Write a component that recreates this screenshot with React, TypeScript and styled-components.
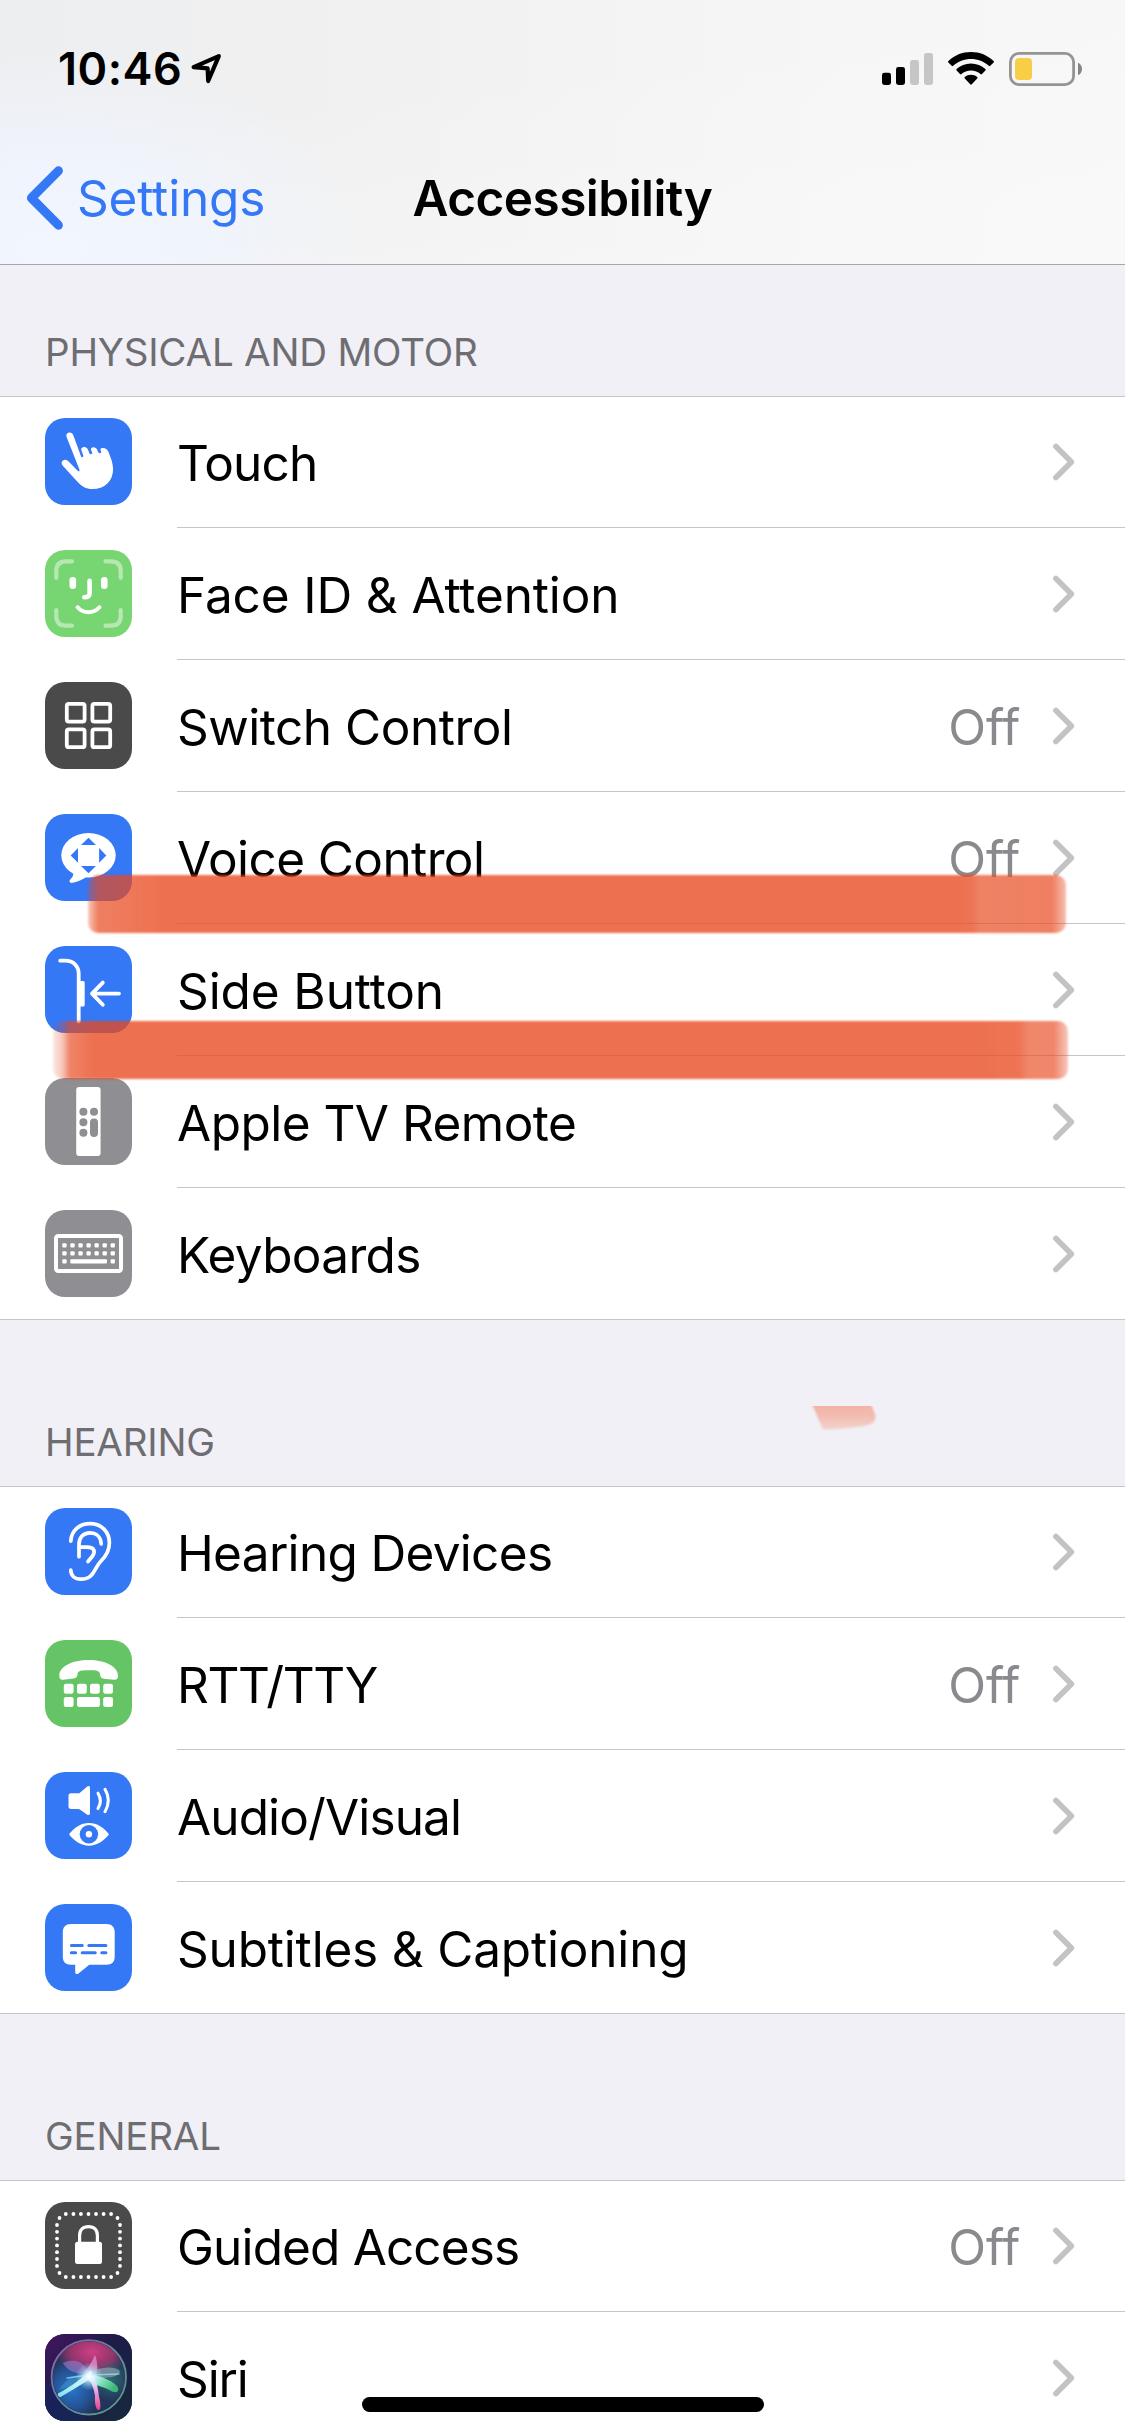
import React from "react";
import styled, { createGlobalStyle } from "styled-components";

const GlobalStyle = createGlobalStyle`
  *, *::before, *::after { box-sizing: border-box; }
  body {
    margin: 0;
    background: #f1f0f6;
    font-family: Inter, "Liberation Sans", sans-serif;
    font-size: 49.5px;
    color: #000;
  }
  svg { display: block; flex: none; }
`;

const Screen = styled.div`
  position: relative;
  width: 1125px;
  height: 2435px;
  overflow: hidden;
  background: #f1f0f6;
`;

const Header = styled.header`
  height: 265px;
  border-bottom: 1px solid #a8a8ac;
  background:
    radial-gradient(ellipse 330px 200px at 50px 250px, #f2f6ff 0%, rgba(240, 245, 255, 0.75) 45%, rgba(240, 244, 255, 0) 100%),
    linear-gradient(172deg, rgba(255, 255, 255, 0) 30%, rgba(255, 255, 255, 0.3) 100%),
    linear-gradient(90deg, #edeef0 0%, #f1f1f1 35%, #f6f6f6 75%, #f7f7f7 100%);
`;

const StatusBar = styled.div`
  display: flex;
  align-items: center;
  height: 132px;
  padding: 6px 43px 0 58px;
`;

const Time = styled.span`
  font-size: 45px;
  font-weight: 600;
  letter-spacing: 0.49px;
  line-height: 56px;
  margin-right: 8px;
`;

const StatusIcons = styled.div`
  display: flex;
  align-items: center;
  gap: 15px;
  margin-left: auto;
`;

const NavBar = styled.nav`
  display: grid;
  grid-template-columns: 1fr auto 1fr;
  align-items: center;
  height: 132px;
`;

const BackLink = styled.a`
  display: flex;
  align-items: center;
  gap: 14px;
  padding-left: 26px;
  color: #3478f6;
  letter-spacing: -0.16px;
  line-height: 60px;
`;

const Title = styled.h1`
  margin: 0;
  font-size: 49.5px;
  font-weight: 600;
  letter-spacing: -0.54px;
  line-height: 60px;
`;

const SectionHeader = styled.h2<{ $height: number }>`
  display: flex;
  align-items: flex-end;
  height: ${(p) => p.$height}px;
  margin: 0;
  padding: 0 45px 21px;
  font-size: 38.5px;
  font-weight: 400;
  letter-spacing: -0.2px;
  line-height: 46px;
  color: #6d6d72;
`;

const Group = styled.div`
  background: #fff;
  box-shadow: inset 0 1px 0 #c6c6c8, inset 0 -1px 0 #c6c6c8;
`;

const RowContent = styled.div`
  display: flex;
  flex: 1;
  align-items: center;
  margin-left: 45px;
  padding-right: 50px;
  border-bottom: 1px solid #c6c6c8;
`;

const Row = styled.div`
  display: flex;
  height: 132px;
  padding-left: 45px;

  &:last-child ${RowContent} {
    border-bottom-color: transparent;
  }
`;

const Tile = styled.div<{ $color: string }>`
  flex: none;
  width: 87px;
  height: 87px;
  margin-top: 22px;
  border-radius: 20px;
  overflow: hidden;
  background: ${(p) => p.$color};
`;

const Label = styled.span<{ $tracking: number }>`
  flex: 1;
  padding-top: 3px;
  line-height: 60px;
  white-space: nowrap;
  letter-spacing: ${(p) => p.$tracking}px;
`;

const Value = styled.span`
  margin-right: 33px;
  padding-top: 3px;
  line-height: 60px;
  letter-spacing: -0.3px;
  color: #8a8a8e;
`;

const HomeIndicator = styled.div`
  position: absolute;
  left: 362px;
  bottom: 23px;
  width: 402px;
  height: 15px;
  border-radius: 8px;
  background: #000;
`;

const Marker = styled.div<{ $x: number; $y: number; $w: number; $h: number; $ink: string }>`
  position: absolute;
  left: ${(p) => p.$x}px;
  top: ${(p) => p.$y}px;
  width: ${(p) => p.$w}px;
  height: ${(p) => p.$h}px;
  border-radius: 10px;
  background: ${(p) => p.$ink};
  filter: blur(0.9px);
`;

const Smudge = styled.svg`
  position: absolute;
  left: 808px;
  top: 1406px;
`;

const BLUE = "#3478f6";
const GRAY = "#8e8e93";
const DARK = "#4a4a4a";

const Glyph = ({ children }: { children: React.ReactNode }) => (
  <svg width="87" height="87" viewBox="0 0 87 87" fill="none" stroke="none" strokeLinecap="round" strokeLinejoin="round">
    {children}
  </svg>
);

const TouchIcon = () => (
  <Glyph>
    <path
      fill="#fff"
      d="M21.7 19.2C20.7 16.6 22 14.9 24 14.5C26 14.2 27.6 15.1 28.3 17.2L36.1 38.6C36.5 39.8 38.8 39.2 38.4 37.8L36.4 32.2C36 30.6 36.4 29.8 38 29.3C40.2 28.7 42 29.5 42.9 31.6L44.5 35.6C45 36.9 47.6 36.3 47.2 34.8L46 31.7C45.7 30.5 46.4 29.7 47.6 29.4C49.6 29 51.5 30 52.3 31.9L53.4 34.5C54 35.8 56.6 35.2 56.2 33.7L55.5 31.8C55.3 30.8 56 30.1 57 30C60 29.7 62.3 31 63.6 34.2C66 40.2 68.1 45.5 68.1 51C68.1 63 59.8 71.1 47.3 71.1C41.2 71.1 36.6 68.4 32.2 63.5L17.8 47.8C16.3 46 16.3 44 17.6 42.7C19.2 41.3 21.4 41.5 23.1 43L32.7 52.7C33.8 53.8 35 53.2 34.4 51.5Z"
    />
  </Glyph>
);

const FaceIcon = () => (
  <Glyph>
    <g stroke="#fff" strokeOpacity="0.46" strokeWidth="4.2">
      <path d="M11.3 27.8V21C11.3 14.5 14.5 11.3 21 11.3H27" />
      <path d="M60.5 11.3H66C72.5 11.3 75.7 14.5 75.7 21V27.8" />
      <path d="M11.3 60V66C11.3 72.5 14.5 75.7 21 75.7H27" />
      <path d="M60.5 75.7H66C72.5 75.7 75.7 72.5 75.7 66V60" />
    </g>
    <rect x="24.5" y="27" width="6.6" height="12" rx="3.3" fill="#fff" />
    <rect x="56" y="27" width="6.6" height="12" rx="3.3" fill="#fff" />
    <path d="M44.6 30.7V43C44.6 46.3 43 47.3 39.3 47.3" stroke="#fff" strokeWidth="4.6" />
    <path d="M32.6 57.3C38.5 64 48.5 64 54.4 57.3" stroke="#fff" strokeWidth="4" />
  </Glyph>
);

const SwitchIcon = () => (
  <Glyph>
    {[21.8, 47.4].map((x) =>
      [21.8, 47.4].map((y) => <rect key={`${x}-${y}`} x={x} y={y} width="17.8" height="17.8" rx="2" stroke="#fff" strokeWidth="3.8" />),
    )}
  </Glyph>
);

const VoiceIcon = () => (
  <Glyph>
    <ellipse cx="43.5" cy="41.3" rx="27.2" ry="22.3" fill="#fff" />
    <path d="M28 57.5C29 61 27.5 63.2 25.2 65.6C23.6 67.6 25 69.4 27.6 68.8C33.5 67.5 38 65.2 42 62.5Z" fill="#fff" />
    <path d="M43.5 23.7L51 31H36ZM43.5 59.3L36 52.1H51ZM25.7 41.4L33 34V48.8ZM61.3 41.4L54.1 48.8V34Z" fill={BLUE} />
  </Glyph>
);

const SideIcon = () => (
  <Glyph>
    <path d="M15.2 14.7H20C28.5 14.7 33.7 20 33.7 28V75.5" stroke="#fff" strokeWidth="3.8" />
    <rect x="33" y="35" width="6.7" height="25.5" rx="1.5" fill="#fff" />
    <path d="M74 47.6H47.2M57.8 36.6L47 47.6L57.8 58.8" stroke="#fff" strokeWidth="3.8" />
  </Glyph>
);

const RemoteIcon = () => (
  <Glyph>
    <rect x="31.2" y="9" width="24.4" height="69" rx="3" fill="#fff" />
    <g fill={GRAY}>
      <circle cx="38.4" cy="33.8" r="4" />
      <circle cx="49" cy="33.8" r="4" />
      <circle cx="38.4" cy="44.3" r="4" />
      <circle cx="38.4" cy="54.8" r="4" />
      <rect x="45" y="40.5" width="8" height="18.4" rx="4" />
    </g>
  </Glyph>
);

const KeyboardIcon = () => (
  <Glyph>
    <rect x="11" y="26" width="65" height="35" rx="2.2" stroke="#fff" strokeWidth="4" />
    <g fill="#fff">
      {[0, 1, 2, 3, 4, 5, 6].map((i) =>
        [0, 1].map((j) => <rect key={`${i}-${j}`} x={17.3 + i * 8.05} y={33.2 + j * 8} width="4.3" height="4.3" rx="1" />),
      )}
      <rect x="17.3" y="49.2" width="4.3" height="4.3" rx="1" />
      <rect x="65.6" y="49.2" width="4.3" height="4.3" rx="1" />
      <rect x="25.3" y="49.2" width="36.7" height="4.3" rx="1" />
    </g>
  </Glyph>
);

const EarIcon = () => (
  <Glyph>
    <g stroke="#fff" strokeWidth="3.7">
      <path d="M25.8 33.2C26.3 22.5 34.5 15.7 45 15.7C56.5 15.7 64.4 23.8 64.4 35C64.4 43 60.8 48.3 56 53C48.5 60.5 49.5 71.2 36 71.2C29.5 71.2 26 67.5 25.8 62.2" />
      <path d="M34 48.7V36.5C34 29.5 38.3 24.9 45 24.9C51.6 24.9 56 29.3 56.2 36" />
      <path d="M34 39.2H42C49.5 39.2 50.5 43.5 47.6 48L43 53.5" />
    </g>
  </Glyph>
);

const PhoneIcon = () => (
  <Glyph>
    <g fill="#fff">
      <path d="M14.3 35.5C14.3 26.5 27 20 43.7 20S73 26.8 73 35.5C73 38.8 71.8 39.9 69 39.7L59 38.7C56.2 38.3 55.2 37 55 34.2C54.7 30.8 52 30.2 43.7 30.2S32.8 30.8 32.5 34.2C32.2 37 31.2 38 28.4 38.4L18.2 39.7C15.4 40 14.3 38.8 14.3 35.5Z" />
      {[18.8, 32, 45, 58.2].map((x) => (
        <rect key={x} x={x} y="43.7" width="9.8" height="10" rx="2.2" />
      ))}
      <rect x="18.8" y="57" width="9.8" height="10" rx="2.2" />
      <rect x="32" y="57" width="22.9" height="10" rx="2.2" />
      <rect x="58.2" y="57" width="9.8" height="10" rx="2.2" />
    </g>
  </Glyph>
);

const AudioVisualIcon = () => (
  <Glyph>
    <path d="M26 21.3H33.2C34 21.3 34.6 21 35.2 20.4L42 14.7C43.3 13.6 45 14 45 15.8V41.3C45 43 43.3 43.6 42 42.4L35.2 37.7C34.6 37.2 34 37 33.2 37H26C24.4 37 23.5 36 23.5 34.5V23.8C23.5 22.3 24.4 21.3 26 21.3Z" fill="#fff" />
    <path d="M53 21.2C56 26 56 31.6 53 36.5M60 17.3C64.3 24.5 64.3 32.5 60 39.7" stroke="#fff" strokeWidth="3.1" />
    <path d="M24 62.3C29 55.7 36 51 44 51S59 55.7 64 62.3C59 69 52 73.7 44 73.7S29 69 24 62.3Z" fill="#fff" />
    <circle cx="43.9" cy="62.2" r="9.2" fill={BLUE} />
    <circle cx="43.9" cy="62.2" r="3.2" fill="#fff" />
  </Glyph>
);

const CaptionIcon = () => (
  <Glyph>
    <path d="M26 20H61.5C66.8 20 69.7 23 69.7 28V52.7C69.7 57.8 66.8 60.7 61.5 60.7H44.3L33.8 69.2C32 70.7 30.2 70.2 30.2 68V60.7H26C20.7 60.7 17.8 57.8 17.8 52.7V28C17.8 23 20.7 20 26 20Z" fill="#fff" />
    <path d="M26.4 41.6H37.3M43.8 41.6H60.9M26.4 48.7H30.6M37.2 48.7H50.3M56.8 48.7H60.9" stroke={BLUE} strokeWidth="3" />
  </Glyph>
);

const columnDots = [23, 29.8, 36.6, 43.4, 50.2, 57, 63.9];
const rowDots = [20.8, 28.4, 35.9, 43.5, 51, 58.6, 66.1];

const LockIcon = () => (
  <Glyph>
    <g fill="#fff">
      {rowDots.map((x) => [12, 75].map((y) => <circle key={`r${x}-${y}`} cx={x} cy={y} r="1.9" />))}
      {columnDots.map((y) => [12, 75].map((x) => <circle key={`c${x}-${y}`} cx={x} cy={y} r="1.9" />))}
      {[14.5, 72.5].map((x) => [16, 71].map((y) => <circle key={`k${x}-${y}`} cx={x} cy={y} r="1.9" />))}
      <rect x="30" y="39.7" width="27" height="22.4" rx="2.5" />
    </g>
    <path d="M34.6 41V33.5C34.6 28 38 24.6 43.5 24.6S52.4 28 52.4 33.5V41" stroke="#fff" strokeWidth="3.2" />
  </Glyph>
);

const SiriIcon = () => (
  <Glyph>
    <defs>
      <linearGradient id="siriBg" x1="0" y1="0" x2="1" y2="1">
        <stop offset="0" stopColor="#431560" />
        <stop offset="0.45" stopColor="#1d1c48" />
        <stop offset="1" stopColor="#162a3c" />
      </linearGradient>
      <linearGradient id="siriRing" x1="0" y1="0" x2="1" y2="1">
        <stop offset="0" stopColor="#9a6bb4" />
        <stop offset="0.5" stopColor="#6f9aa8" />
        <stop offset="1" stopColor="#6fae9c" />
      </linearGradient>
      <radialGradient id="siriPink">
        <stop offset="0" stopColor="#cf3f86" />
        <stop offset="0.6" stopColor="#a8356e" stopOpacity="0.85" />
        <stop offset="1" stopColor="#a8356e" stopOpacity="0" />
      </radialGradient>
      <radialGradient id="siriBlue">
        <stop offset="0" stopColor="#2a78cc" />
        <stop offset="0.6" stopColor="#245ca6" stopOpacity="0.8" />
        <stop offset="1" stopColor="#245ca6" stopOpacity="0" />
      </radialGradient>
      <radialGradient id="siriGreen">
        <stop offset="0" stopColor="#2f7f78" stopOpacity="0.7" />
        <stop offset="1" stopColor="#2f7f78" stopOpacity="0" />
      </radialGradient>
      <radialGradient id="siriGlow">
        <stop offset="0" stopColor="#fff" />
        <stop offset="0.35" stopColor="#d4f4ff" stopOpacity="0.75" />
        <stop offset="1" stopColor="#9adfff" stopOpacity="0" />
      </radialGradient>
      <linearGradient id="siriArm" x1="1" y1="0" x2="0" y2="1">
        <stop offset="0" stopColor="#fff" />
        <stop offset="1" stopColor="#7fe2ee" />
      </linearGradient>
      <linearGradient id="siriLeaf" x1="0" y1="0" x2="1" y2="0.5">
        <stop offset="0" stopColor="#f0fffb" />
        <stop offset="0.55" stopColor="#7fe0b8" />
        <stop offset="1" stopColor="#3cb878" />
      </linearGradient>
      <linearGradient id="siriStem" x1="0" y1="0" x2="0" y2="1">
        <stop offset="0" stopColor="#fff" />
        <stop offset="0.5" stopColor="#e79bdc" />
        <stop offset="1" stopColor="#e0448c" />
      </linearGradient>
      <clipPath id="siriClip">
        <circle cx="43.8" cy="43.3" r="36" />
      </clipPath>
      <filter id="siriSoft" x="-20%" y="-20%" width="140%" height="140%">
        <feGaussianBlur stdDeviation="0.7" />
      </filter>
    </defs>
    <rect width="87" height="87" fill="url(#siriBg)" />
    <rect y="50" width="40" height="37" fill="#142a6c" opacity="0.45" filter="url(#siriSoft)" />
    <circle cx="43.8" cy="43.3" r="36" fill="#22345a" />
    <g clipPath="url(#siriClip)">
      <ellipse cx="47" cy="18" rx="36" ry="25" fill="url(#siriPink)" />
      <ellipse cx="27" cy="55" rx="30" ry="31" fill="url(#siriBlue)" />
      <ellipse cx="66" cy="46" rx="22" ry="22" fill="url(#siriGreen)" />
      <g filter="url(#siriSoft)">
        <path d="M18 29C29 24 39 27 44 40C33 41 22 37 18 29Z" fill="#b583d0" opacity="0.5" />
        <path d="M50 21C53 29 53 36 50 44L36 43C42 36 47 28 50 21Z" fill="#e59ad4" opacity="0.7" />
        <path d="M44 40C55 32 71 32 75 37C75 43 62 45 45 44Z" fill="#9fb8c6" opacity="0.55" />
        <path d="M44 40C32 38 20 45 14 56L44 46Z" fill="#4db2dc" opacity="0.35" />
        <path d="M46 36C37 44 27 52 13 59.5C12.5 61.5 13.5 63 15.5 63C27 56 38 50 48 43Z" fill="url(#siriArm)" />
        <path d="M43 40C53 41 65 45 72 52C75 57 72 60 66 57C58 52 50 52 43 46Z" fill="url(#siriLeaf)" />
        <path d="M41 42C47 48 49 55 50 62C49.5 69 51 76 53.5 76C56 76 56 70 54 63C53 55 52 49 49 42Z" fill="url(#siriStem)" />
        <path d="M22 44L44 41L74 40" stroke="#b9f3f2" strokeWidth="1.4" opacity="0.6" />
      </g>
      <circle cx="44.5" cy="42.5" r="14" fill="url(#siriGlow)" />
    </g>
    <circle cx="43.8" cy="43.3" r="37.2" stroke="url(#siriRing)" strokeWidth="1.8" opacity="0.85" />
  </Glyph>
);

const Chevron = () => (
  <svg width="22" height="38" viewBox="0 0 22 38" fill="none">
    <path d="M2.9 3.5L18.4 19L2.9 34.5" stroke="#c3c3c6" strokeWidth="5.6" strokeLinecap="round" strokeLinejoin="round" />
  </svg>
);

type Item = { label: string; tracking: number; color: string; icon: React.ReactNode; value?: string };
type SectionData = { title: string; height: number; items: Item[] };

const sections: SectionData[] = [
  {
    title: "PHYSICAL AND MOTOR",
    height: 131,
    items: [
      { label: "Touch", tracking: -0.83, color: BLUE, icon: <TouchIcon /> },
      { label: "Face ID & Attention", tracking: -0.12, color: "#78d672", icon: <FaceIcon /> },
      { label: "Switch Control", tracking: -0.48, color: DARK, icon: <SwitchIcon />, value: "Off" },
      { label: "Voice Control", tracking: -0.6, color: BLUE, icon: <VoiceIcon />, value: "Off" },
      { label: "Side Button", tracking: -0.1, color: BLUE, icon: <SideIcon /> },
      { label: "Apple TV Remote", tracking: -0.52, color: GRAY, icon: <RemoteIcon /> },
      { label: "Keyboards", tracking: -0.68, color: GRAY, icon: <KeyboardIcon /> },
    ],
  },
  {
    title: "HEARING",
    height: 166,
    items: [
      { label: "Hearing Devices", tracking: -0.68, color: BLUE, icon: <EarIcon /> },
      { label: "RTT/TTY", tracking: -1.35, color: "#65c466", icon: <PhoneIcon />, value: "Off" },
      { label: "Audio/Visual", tracking: -0.87, color: BLUE, icon: <AudioVisualIcon /> },
      { label: "Subtitles & Captioning", tracking: -0.18, color: BLUE, icon: <CaptionIcon /> },
    ],
  },
  {
    title: "GENERAL",
    height: 166,
    items: [
      { label: "Guided Access", tracking: -0.85, color: DARK, icon: <LockIcon />, value: "Off" },
      { label: "Siri", tracking: -1.1, color: "#1d1c48", icon: <SiriIcon /> },
    ],
  },
];

const ink = (alpha: number) => `rgba(232, 73, 31, ${alpha})`;

export default function App() {
  return (
    <>
      <GlobalStyle />
      <Screen>
        <Header>
          <StatusBar>
            <Time>10:46</Time>
            <svg width="33" height="34" viewBox="0 0 33 34" fill="none">
              <path d="M3.6 15.2L28.8 4.2L18.2 29L17.6 16.4Z" stroke="#000" strokeWidth="4.2" strokeLinejoin="round" />
            </svg>
            <StatusIcons>
              <svg width="51" height="34" viewBox="0 0 51 34">
                <rect x="0" y="20.8" width="9" height="12.2" rx="2.4" fill="#000" />
                <rect x="14" y="15" width="9" height="18" rx="2.4" fill="#000" />
                <rect x="28" y="8" width="9" height="25" rx="2.4" fill="#c6c6c6" />
                <rect x="42" y="1" width="9" height="32" rx="2.4" fill="#c6c6c6" />
              </svg>
              <svg width="46" height="34" viewBox="0 0 46 34" fill="#000">
                <path d="M23 0C31.8 0 39.6 3.3 45.6 9C46.1 9.5 46.1 10 45.6 10.5L42.3 13.8C41.8 14.3 41.3 14.3 40.8 13.8C36 9.4 29.8 7 23 7S10 9.4 5.2 13.8C4.7 14.3 4.2 14.3 3.7 13.8L.4 10.5C-.1 10-.1 9.5.4 9C6.4 3.3 14.2 0 23 0Z" />
                <path d="M23 11.4C28.6 11.4 33.6 13.5 37.4 17.1C37.9 17.6 37.9 18.1 37.4 18.6L34 22C33.5 22.5 33 22.5 32.5 22C30 19.8 26.7 18.4 23 18.4S16 19.8 13.5 22C13 22.5 12.5 22.5 12 22L8.6 18.6C8.1 18.1 8.1 17.6 8.6 17.1C12.4 13.5 17.4 11.4 23 11.4Z" />
                <path d="M23 22.8C25.5 22.8 27.5 23.6 29.2 25.1C29.7 25.6 29.7 26.1 29.2 26.6L23.8 32.2C23.3 32.8 22.7 32.8 22.2 32.2L16.8 26.6C16.3 26.1 16.3 25.6 16.8 25.1C18.5 23.6 20.5 22.8 23 22.8Z" />
              </svg>
              <svg width="73" height="34" viewBox="0 0 73 34">
                <rect x="1.4" y="1.4" width="63.2" height="31.2" rx="8.6" fill="none" stroke="#949494" strokeWidth="2.8" />
                <rect x="6" y="6" width="17" height="22" rx="4" fill="#f7ce46" />
                <path d="M69 10.7C71.6 11.8 73 14 73 17S71.6 22.2 69 23.3Z" fill="#868686" />
              </svg>
            </StatusIcons>
          </StatusBar>
          <NavBar>
            <BackLink>
              <svg width="37" height="64" viewBox="0 0 37 64" fill="none">
                <path d="M32.4 4.8L5.4 32L32.4 59.2" stroke={BLUE} strokeWidth="9" strokeLinecap="round" strokeLinejoin="round" />
              </svg>
              Settings
            </BackLink>
            <Title>Accessibility</Title>
          </NavBar>
        </Header>

        {sections.map((section) => (
          <section key={section.title}>
            <SectionHeader $height={section.height}>{section.title}</SectionHeader>
            <Group>
              {section.items.map((item) => (
                <Row key={item.label}>
                  <Tile $color={item.color}>{item.icon}</Tile>
                  <RowContent>
                    <Label $tracking={item.tracking}>{item.label}</Label>
                    {item.value && <Value>{item.value}</Value>}
                    <Chevron />
                  </RowContent>
                </Row>
              ))}
            </Group>
          </section>
        ))}

        <Marker
          $x={88}
          $y={875}
          $w={978}
          $h={58}
          $ink={`linear-gradient(90deg, ${ink(0.3)} 0, ${ink(0.7)} 10px, ${ink(0.76)} 60px, ${ink(0.78)} 76px, ${ink(0.78)} 870px, ${ink(0.76)} 884px, ${ink(0.69)} 892px, ${ink(0.7)} 964px, ${ink(0.35)} 978px)`}
        />
        <Marker
          $x={53}
          $y={1021}
          $w={1015}
          $h={58}
          $ink={`linear-gradient(90deg, ${ink(0.12)} 0, ${ink(0.3)} 9px, ${ink(0.68)} 17px, ${ink(0.78)} 40px, ${ink(0.78)} 920px, ${ink(0.76)} 966px, ${ink(0.66)} 976px, ${ink(0.66)} 1001px, ${ink(0.3)} 1015px)`}
        />
        <Smudge width="74" height="28" viewBox="0 0 74 28">
          <defs>
            <linearGradient id="smudge" x1="0" y1="0" x2="0" y2="1">
              <stop offset="0" stopColor="#f2b0a2" />
              <stop offset="0.5" stopColor="#f3bbb0" />
              <stop offset="1" stopColor="#f3d3ce" />
            </linearGradient>
            <filter id="smudgeSoft">
              <feGaussianBlur stdDeviation="1" />
            </filter>
          </defs>
          <path d="M3 -4L15 23.5C30 23.5 50 21.5 60 19C67 17 68.5 13 67 8L62 -4Z" fill="url(#smudge)" filter="url(#smudgeSoft)" />
        </Smudge>
        <HomeIndicator />
      </Screen>
    </>
  );
}
